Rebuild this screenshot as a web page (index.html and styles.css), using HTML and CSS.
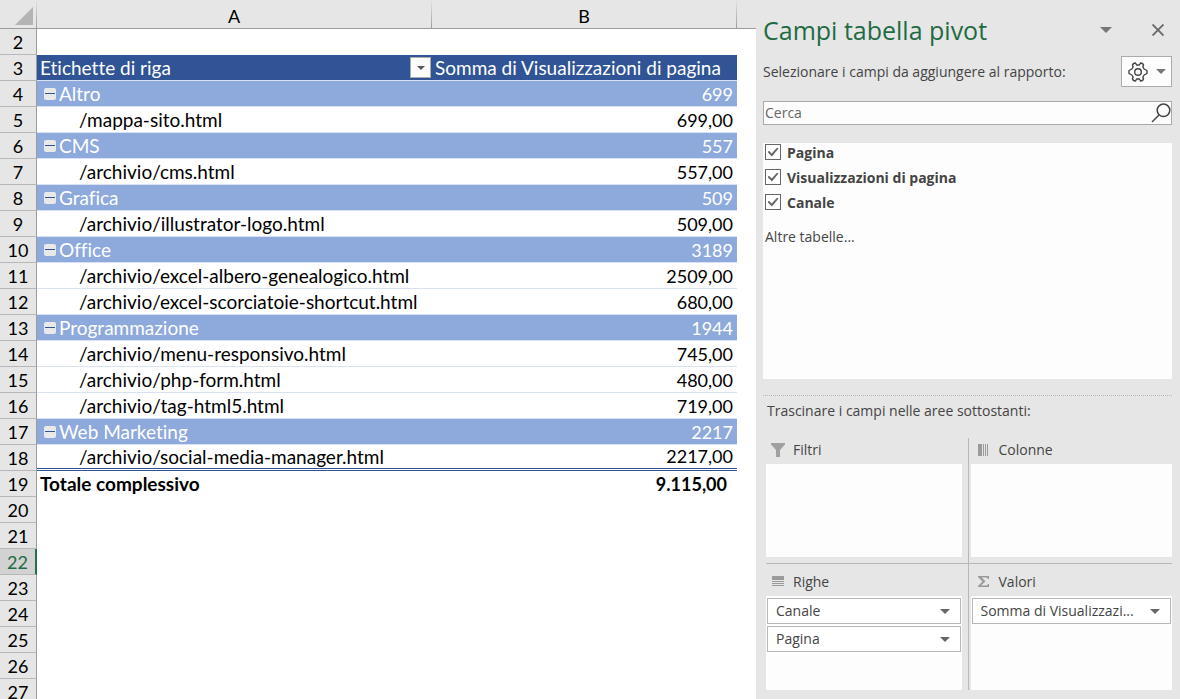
FILE: index.html
```html
<!DOCTYPE html>
<html lang="it">
<head>
<meta charset="utf-8">
<title>Campi tabella pivot</title>
<link rel="stylesheet" href="styles.css">
</head>
<body>
<div class="app">
<main class="sheet">
<table class="grid">
<colgroup><col class="col-num"><col class="col-a"><col class="col-b"><col></colgroup>
<thead>
<tr><th class="corner"><svg width="18" height="18" viewBox="0 0 18 18" aria-hidden="true"><path d="M18 0V18H0Z" fill="#b4b4b4"/></svg></th><th scope="col">A</th><th scope="col">B</th><th class="rest"></th></tr>
</thead>
<tbody>
<tr><th scope="row">2</th><td></td><td></td><td></td></tr>
<tr class="head"><th scope="row">3</th><td><div class="head-cell">Etichette di riga<button class="filter" type="button" aria-label="Filtra etichette"><svg width="8" height="4" viewBox="0 0 8 4" aria-hidden="true"><path d="M0 0H8L4 4Z" fill="#555"/></svg></button></div></td><td>Somma di Visualizzazioni di pagina</td><td></td></tr>
<tr class="group"><th scope="row">4</th><td><div class="group-cell"><button class="toggle" type="button" aria-label="Comprimi Altro"></button>Altro</div></td><td class="num">699</td><td></td></tr>
<tr class="item"><th scope="row">5</th><td>/mappa-sito.html</td><td class="num">699,00</td><td></td></tr>
<tr class="group"><th scope="row">6</th><td><div class="group-cell"><button class="toggle" type="button" aria-label="Comprimi CMS"></button>CMS</div></td><td class="num">557</td><td></td></tr>
<tr class="item"><th scope="row">7</th><td>/archivio/cms.html</td><td class="num">557,00</td><td></td></tr>
<tr class="group"><th scope="row">8</th><td><div class="group-cell"><button class="toggle" type="button" aria-label="Comprimi Grafica"></button>Grafica</div></td><td class="num">509</td><td></td></tr>
<tr class="item"><th scope="row">9</th><td>/archivio/illustrator-logo.html</td><td class="num">509,00</td><td></td></tr>
<tr class="group"><th scope="row">10</th><td><div class="group-cell"><button class="toggle" type="button" aria-label="Comprimi Office"></button>Office</div></td><td class="num">3189</td><td></td></tr>
<tr class="item"><th scope="row">11</th><td>/archivio/excel-albero-genealogico.html</td><td class="num">2509,00</td><td></td></tr>
<tr class="item"><th scope="row">12</th><td>/archivio/excel-scorciatoie-shortcut.html</td><td class="num">680,00</td><td></td></tr>
<tr class="group"><th scope="row">13</th><td><div class="group-cell"><button class="toggle" type="button" aria-label="Comprimi Programmazione"></button>Programmazione</div></td><td class="num">1944</td><td></td></tr>
<tr class="item"><th scope="row">14</th><td>/archivio/menu-responsivo.html</td><td class="num">745,00</td><td></td></tr>
<tr class="item"><th scope="row">15</th><td>/archivio/php-form.html</td><td class="num">480,00</td><td></td></tr>
<tr class="item"><th scope="row">16</th><td>/archivio/tag-html5.html</td><td class="num">719,00</td><td></td></tr>
<tr class="group"><th scope="row">17</th><td><div class="group-cell"><button class="toggle" type="button" aria-label="Comprimi Web Marketing"></button>Web Marketing</div></td><td class="num">2217</td><td></td></tr>
<tr class="item last"><th scope="row">18</th><td>/archivio/social-media-manager.html</td><td class="num">2217,00</td><td></td></tr>
<tr class="total"><th scope="row">19</th><td>Totale complessivo</td><td class="num">9.115,00</td><td></td></tr>
<tr><th scope="row">20</th><td></td><td></td><td></td></tr>
<tr><th scope="row">21</th><td></td><td></td><td></td></tr>
<tr class="active"><th scope="row">22</th><td></td><td></td><td></td></tr>
<tr><th scope="row">23</th><td></td><td></td><td></td></tr>
<tr><th scope="row">24</th><td></td><td></td><td></td></tr>
<tr><th scope="row">25</th><td></td><td></td><td></td></tr>
<tr><th scope="row">26</th><td></td><td></td><td></td></tr>
<tr><th scope="row">27</th><td></td><td></td><td></td></tr>
</tbody>
</table>
</main>
<aside class="pane">
<header class="pane-head">
<h1>Campi tabella pivot</h1>
<button class="plain" type="button" aria-label="Opzioni riquadro"><svg width="12" height="6" viewBox="0 0 12 6" aria-hidden="true"><path d="M0 0H12L6 6Z" fill="#777"/></svg></button>
<button class="plain close" type="button" aria-label="Chiudi"><svg width="12" height="12" viewBox="0 0 12 12" aria-hidden="true"><path d="M0.5 0.5L11.5 11.5M11.5 0.5L0.5 11.5" stroke="#6a6a6a" stroke-width="1.9"/></svg></button>
</header>
<div class="prompt">
<p>Selezionare i campi da aggiungere al rapporto:</p>
<button class="tools" type="button" aria-label="Strumenti">
<svg width="20" height="20" viewBox="0 0 20 20" fill="none" stroke="#444" stroke-width="1.4" stroke-linejoin="round" aria-hidden="true"><path d="M5.5 1.5L7.5 1L8.6 3H11.4L12.5 1L14.5 1.5L15.5 3L14.9 5L16.1 7L19 8.5V11.5L16.1 13L14.9 15L15.5 17L14.5 18.5L12.5 19L11.4 17H8.6L7.5 19L5.5 18.5L4.5 17L5.1 15L3.9 13L1 11.5V8.5L3.9 7L5.1 5L4.5 3Z"/><circle cx="10" cy="10" r="3.3"/></svg>
<svg width="10" height="5" viewBox="0 0 10 5" aria-hidden="true"><path d="M0 0H10L5 5Z" fill="#777"/></svg>
</button>
</div>
<div class="search">
<input type="text" placeholder="Cerca" aria-label="Cerca">
<svg width="20" height="20" viewBox="0 0 20 20" fill="none" stroke="#444" stroke-width="1.5" aria-hidden="true"><circle cx="12.5" cy="7.3" r="6.3"/><path d="M8 12L1 19"/></svg>
</div>
<section class="fields">
<label><input type="checkbox" checked>Pagina</label>
<label><input type="checkbox" checked>Visualizzazioni di pagina</label>
<label><input type="checkbox" checked>Canale</label>
<a href="#">Altre tabelle...</a>
</section>
<p class="drag">Trascinare i campi nelle aree sottostanti:</p>
<div class="areas">
<section class="area">
<h2><svg width="14" height="14" viewBox="0 0 14 14" aria-hidden="true"><path d="M0 0H14V1.5L9 7V14H5V7L0 1.5Z" fill="#a0a0a0"/></svg>Filtri</h2>
<div class="drop"></div>
</section>
<section class="area">
<h2><svg width="14" height="14" viewBox="0 0 14 14" aria-hidden="true"><path d="M1 1H5V13H1ZM6 1H7V13H6ZM8 1H9V13H8ZM10 1H11V13H10Z" fill="#9a9a9a"/></svg>Colonne</h2>
<div class="drop"></div>
</section>
<section class="area">
<h2><svg width="14" height="14" viewBox="0 0 14 14" aria-hidden="true"><path d="M1 1H13V5H1ZM1 6H13V7H1ZM1 8H13V9H1ZM1 10H13V11H1Z" fill="#9a9a9a"/></svg>Righe</h2>
<div class="drop">
<button class="field" type="button" aria-haspopup="menu">Canale<svg width="10" height="5" viewBox="0 0 10 5" aria-hidden="true"><path d="M0 0H10L5 5Z" fill="#666"/></svg></button>
<button class="field" type="button" aria-haspopup="menu">Pagina<svg width="10" height="5" viewBox="0 0 10 5" aria-hidden="true"><path d="M0 0H10L5 5Z" fill="#666"/></svg></button>
</div>
</section>
<section class="area">
<h2><svg width="14" height="14" viewBox="0 0 14 14" aria-hidden="true"><path d="M1 1H12V4H11L10 2.5H4.5L8.5 6.2L4 10.5H10L11 9H12V12H1V11L5.5 6.5L1 2Z" fill="#999"/></svg>Valori</h2>
<div class="drop">
<button class="field" type="button" aria-haspopup="menu">Somma di Visualizzazi...<svg width="10" height="5" viewBox="0 0 10 5" aria-hidden="true"><path d="M0 0H10L5 5Z" fill="#666"/></svg></button>
</div>
</section>
</div>
</aside>
</div>
</body>
</html>
```
FILE: styles.css
```css
* { box-sizing: border-box; }
body { margin: 0; background: #fff; }
h1, h2, p { margin: 0; font-weight: 400; }
button { padding: 0; border: 0; background: none; font: inherit; color: inherit; }
svg { display: block; flex: none; }

.app { display: flex; height: 100vh; overflow: hidden; }

/* Spreadsheet */
.sheet { flex: 1; min-width: 0; overflow: hidden; font: 19px/24px Lato, Carlito, sans-serif; font-variant-ligatures: none; color: #000; }
.grid { width: 100%; table-layout: fixed; border-collapse: separate; border-spacing: 0; }
.col-num { width: 37px; }
.col-a { width: 395px; }
.col-b { width: 305px; }
.grid tr { height: 26px; }
.grid th, .grid td { padding: 0; white-space: nowrap; vertical-align: middle; }
.grid td { padding: 0 4px 0 3px; }
.grid th { font-size: 18px; font-weight: 400; background: #e6e6e6; }
.grid thead th { height: 29px; padding-top: 4px; border-bottom: 1px solid #9b9b9b; border-right: 1px solid; border-image: linear-gradient(#e6e6e6, #9b9b9b) 1; }
.grid thead .rest { border-right: 0; }
.grid .corner svg { margin: 0 3px 0 auto; }
.grid tbody th { border-right: 1px solid #9b9b9b; border-bottom: 1px solid #b8b8b8; }
.head td:nth-child(-n+3) { background: #305496; color: #fff; border-bottom: 1px solid #d9e1f2; }
.head-cell { display: flex; align-items: center; justify-content: space-between; margin-right: -4px; }
.filter { display: grid; place-items: center; width: 21px; height: 21px; margin-right: 1px; border: 1px solid #ababab; background: #fcfcfc; }
.group td:nth-child(-n+3) { background: #8ea9db; color: #fff; border-bottom: 1px solid #d9e1f2; }
.group-cell { display: flex; align-items: center; gap: 3px; padding-left: 4px; }
.item td:nth-child(-n+3) { border-bottom: 1px solid #d9e1f2; }
.item td:nth-child(2) { padding-left: 42px; }
.item.last td:nth-child(-n+3) { border-bottom: 3px double #305496; line-height: 23px; }
.toggle { display: grid; place-items: center; width: 12px; height: 12px; border-radius: 2px; background: #e9e9e9; }
.toggle::before { content: ""; width: 10px; height: 1px; background: #305496; }
.grid .num { font-size: 18px; text-align: right; }
.total td { font-weight: 700; }
.grid .total .num { padding-right: 10px; }
.grid .active th { background: #d2d2d2; color: #1f6b43; border-right: 2px solid #217346; }

/* Field pane */
.pane { display: flex; flex-direction: column; flex: 0 0 424px; padding: 12px 8px 9px 7px; background: #e6e6e6; font: 14px/20px "Open Sans", "Noto Sans", sans-serif; color: #444; }
.pane-head { display: flex; align-items: center; height: 36px; }
.pane-head h1 { flex: 1; font-size: 25px; line-height: 36px; color: #1f6b43; }
.plain { display: grid; place-items: center; width: 20px; height: 20px; }
.close { margin: 0 4px 0 32px; }
.prompt { display: flex; align-items: center; justify-content: space-between; margin-top: 8px; }
.tools { display: flex; align-items: center; justify-content: center; gap: 8px; width: 51px; height: 31px; border: 1px solid #ababab; background: #fdfdfd; }
.search { display: flex; align-items: center; height: 24px; margin-top: 14px; border: 1px solid #ababab; background: #fdfdfd; }
.search input { flex: 1; min-width: 0; padding: 0 1px; border: 0; outline: 0; background: none; font: inherit; }
.search input::placeholder { color: #666; opacity: 1; }
.fields { display: flex; flex-direction: column; flex: 236 1 0; margin-top: 18px; padding: 0 2px; background: #fdfdfd; }
.fields label { display: flex; align-items: flex-start; gap: 6px; height: 25px; font-weight: 700; }
.fields input { display: grid; place-items: center; width: 16px; height: 16px; margin: 1px 0 0; appearance: none; border: 1px solid #666; background: #fff; }
.fields input:checked::before { content: ""; width: 11px; height: 9px; background: #666; clip-path: polygon(0 50%, 14% 36%, 38% 66%, 88% 0, 100% 12%, 40% 100%); }
.fields a { margin-top: 9px; color: #444; text-decoration: none; }
.drag { margin-top: 16px; padding: 5px 4px 0; border-top: 1px dotted #b8b8b8; }
.areas { display: grid; grid-template-columns: 203fr 204fr; grid-template-rows: 125fr 127fr; flex: 252 1 0; margin: 17px 0 0 3px; }
.area { display: flex; flex-direction: column; padding: 0 0 6px; }
.area:nth-child(odd) { padding-right: 6px; border-right: 1px solid #b8b8b8; }
.area:nth-child(even) { padding-left: 2px; }
.area:nth-child(n+3) { border-top: 1px solid #b8b8b8; padding-bottom: 0; padding-top: 6px; }
.area h2 { display: flex; align-items: center; gap: 8px; height: 26px; padding: 0 0 3px 5px; font-size: 14px; line-height: 20px; }
.area:nth-child(even) h2 { padding-left: 6px; }
.drop { display: flex; flex-direction: column; gap: 2px; flex: 1; padding: 2px 1px; background: #fdfdfd; }
.field { display: flex; align-items: center; justify-content: space-between; height: 26px; padding: 0 10px 0 8px; border: 1px solid #b8b8b8; background: #fff; }
```
